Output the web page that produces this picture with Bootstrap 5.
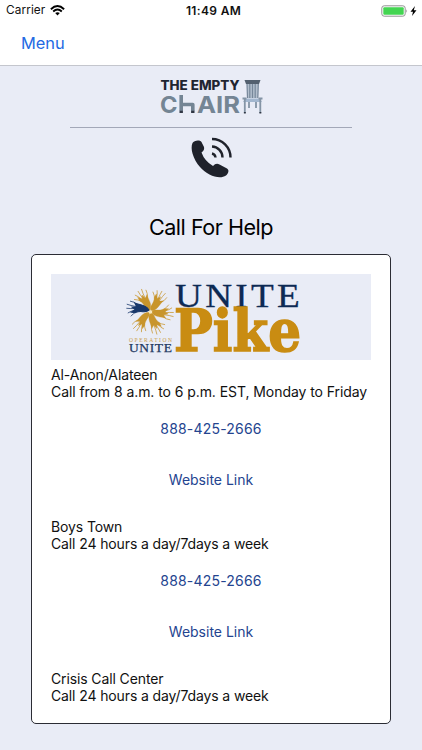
<!DOCTYPE html>
<html lang="en">
<head>
  <meta charset="UTF-8" />
  <meta name="viewport" content="width=device-width, initial-scale=1.0" />
  <title>Call For Help</title>
  <link href="https://cdn.jsdelivr.net/npm/bootstrap@5.3.0/dist/css/bootstrap.min.css" rel="stylesheet">
  <style>
    body { background: #e9ecf6; color: #111; font-family: Inter, "Liberation Sans", sans-serif; height: 750px; overflow: hidden; }
    svg { display: block; overflow: visible; }
    .status-bar { height: 21px; padding: 0 4px 0 6px; font-size: 11.8px; line-height: 21px; }
    .status-bar .carrier { letter-spacing: .1px; }
    .status-bar .clock { font-size: 12px; font-weight: 600; letter-spacing: .35px; padding-left: 3px; }
    .top-nav { height: 45px; padding: 0 21px; border-bottom: 1px solid #c4c6cd; }
    .menu-link { color: #2469e3; font-size: 16.4px; line-height: 44px; text-decoration: none; }
    .logo-row { height: 60px; padding-top: 12px; }
    .rule { width: 282px; height: 1px; margin-top: 1px; background: #a3a8b8; }
    .page-title { font-size: 21.6px; line-height: 28px; font-weight: 400; margin: 31px 0 13px; letter-spacing: -.5px; color: #000; }
    .help-card { width: 360px; height: 470px; margin: 0 31px; padding: 19px; border: 1px solid #2b2c34; border-radius: 5px; }
    .banner { height: 86px; background: #e9ecf6; }
    .entries { padding-top: 6px; }
    .entry { height: 152.2px; font-size: 14px; line-height: 17px; letter-spacing: -.12px; }
    .hours-long { letter-spacing: -.07px; }
    .call-link { color: #24448f; text-decoration: none; }
    .phone { margin-top: 20px; letter-spacing: .2px; }
    .website { margin-top: 34px; letter-spacing: 0; }
  </style>
</head>
<body>
  <header class="bg-white">
    <div class="status-bar row g-0">
      <div class="col d-flex align-items-center gap-1">
        <span class="carrier">Carrier</span>
        <svg width="15" height="11" viewBox="-1 0 15 11" fill="none" stroke="#000" stroke-width="1.9">
          <path d="M.9 4.2Q7.5-2 14.1 4.2M3.2 6.5Q7.5 2.6 11.8 6.5" />
          <path d="M5.2 8.1Q7.5 6.2 9.8 8.1L7.5 10.5Z" fill="#000" stroke="none" />
        </svg>
      </div>
      <div class="col-auto clock">11:49 AM</div>
      <div class="col d-flex align-items-center justify-content-end">
        <svg width="37" height="12" viewBox="0 0 37 12">
          <rect x=".8" y=".8" width="23.4" height="10.4" rx="2.4" fill="#fff" stroke="#929292" />
          <rect x="2.3" y="2.3" width="20.4" height="7.4" rx="1" fill="#43d551" />
          <path d="M25.3 4.2Q27 6 25.3 7.8Z" fill="#929292" />
          <path d="M34 1L29.5 6.7H32L31 11L35.5 5.2H32.8Z" fill="#000" />
        </svg>
      </div>
    </div>
    <nav class="top-nav">
      <a class="menu-link" href="#">Menu</a>
    </nav>
  </header>

  <main>
    <div class="logo-row d-flex justify-content-center">
      <svg width="104" height="38" viewBox="159.500 78 104 38">
        <g font-family="Inter, sans-serif" font-weight="700">
          <text x="161" y="90.300" font-size="13.200" font-weight="800" textLength="79" lengthAdjust="spacingAndGlyphs" fill="#1f2531">THE EMPTY</text>
          <text x="160.500" y="113" font-size="23" textLength="17.500" lengthAdjust="spacingAndGlyphs" fill="#748594">C</text>
          <text x="197.500" y="113" font-size="23" textLength="43" lengthAdjust="spacingAndGlyphs" fill="#748594">AIR</text>
        </g>
        <!-- the "h" is a small chair seen from the side -->
        <path d="M181.700 95V111M181.700 104.500H193.300V111" fill="none" stroke="#748594" stroke-width="3.600" stroke-linejoin="round" />
        <path d="M180 110.800H183.400V113H180ZM191.600 110.800H195V113H191.600Z" fill="#303744" />
        <path d="M247.500 84H259L258.500 98H247.500Z" fill="#b3bfcd" />
        <path d="M247.500 84L248 98M250.300 84V98M253 84V98M255.700 84V98M258.800 84L258.300 98" stroke="#76879a" stroke-width="1.200" />
        <path d="M245 80H261L259.500 84H246.500Z" fill="#53606f" />
        <path d="M246 98.500H260L262.500 102H243.500Z" fill="#a3b7cf" />
        <path d="M245.300 99V113M260.800 99V113M249.500 102V108M256.500 102V108M243 98.500H247M259 98.500H263" stroke="#8494a5" stroke-width="1.800" />
        <path d="M244.400 112H246.300V113.500H244.400ZM259.900 112H261.800V113.500H259.900Z" fill="#303744" />
      </svg>
    </div>
    <div class="rule mx-auto"></div>
    <svg class="phone-icon mx-auto" width="44" height="54" viewBox="189 128 44 54">
      <path d="M192.500 143C194 140.500 199.500 139.500 201.500 142L204 147Q204.800 150 201.500 152.500Q204.500 161 213 166Q216 162.500 219.500 164.500L227 168.500C229.500 170 228.500 173.500 226 175.500C219.500 180 207.500 175.500 200 167C193 159 190 148.500 192.500 143Z" fill="#1f222b" />
      <path d="M212 153.500A4.500 4.500 0 0 1 215.500 157.500M212 146.500A11 11 0 0 1 222.500 157.500M212 139A18.500 18.500 0 0 1 230.500 157.500" fill="none" stroke="#1f222b" stroke-width="2.400" />
    </svg>
    <h1 class="page-title text-center">Call For Help</h1>

    <section class="help-card bg-white">
      <div class="banner">
        <svg width="320" height="86" viewBox="51 274 320 86">
          <defs>
            <g id="blade">
              <path d="M0-1C-5-4-2-8-7-13L-8-17L-4-14.500L-3-18L-1-14L2-17C1-12 5-7 0-1Z" />
              <path d="M-5-12Q-9-15-12-16M-5-14Q-7-18-10-20M-3-14Q-5-19-6-23M-1-14Q-2-20-2-24M1-14Q3-18 2-22" fill="none" stroke-width=".7" />
            </g>
          </defs>
          <g transform="translate(150 311.500)" fill="#c8952c" stroke="#c8952c" stroke-width=".3">
            <use href="#blade" transform="rotate(-16)" />
            <use href="#blade" transform="rotate(45)" />
            <use href="#blade" transform="rotate(107)" />
            <use href="#blade" transform="rotate(168)" />
            <use href="#blade" transform="rotate(229)" />
            <use href="#blade" transform="translate(0 -1) rotate(290)" fill="#19386b" stroke="#19386b" stroke-width="1" />
          </g>
          <circle cx="150.500" cy="312" r="1.800" fill="#f7e7bd" />
          <g font-family="'Liberation Serif', serif">
            <text x="129" y="342" font-size="5.500" textLength="43" fill="#c9a04a">OPERATION</text>
            <text x="129" y="351.500" font-size="13" letter-spacing=".6" textLength="43.500" lengthAdjust="spacingAndGlyphs" fill="#20375f" stroke="#20375f" stroke-width=".25">UNITE</text>
            <text x="175" y="306.500" font-size="34.500" letter-spacing="3" textLength="128" lengthAdjust="spacingAndGlyphs" fill="#0d2a54" stroke="#0d2a54" stroke-width=".3">UNITE</text>
          </g>
          <text x="174" y="350.800" font-family="'DejaVu Serif', serif" font-size="57.500" font-weight="700" textLength="127" lengthAdjust="spacingAndGlyphs" fill="#c98c12" stroke="#c98c12" stroke-width="1.600">Pike</text>
        </svg>
      </div>

      <div class="entries">
        <article class="entry">
          <div>Al-Anon/Alateen</div>
          <div class="hours-long">Call from 8 a.m. to 6 p.m. EST, Monday to Friday</div>
          <div class="phone text-center"><a class="call-link" href="tel:888-425-2666">888-425-2666</a></div>
          <div class="website text-center"><a class="call-link" href="#">Website Link</a></div>
        </article>
        <article class="entry">
          <div>Boys Town</div>
          <div>Call 24 hours a day/7days a week</div>
          <div class="phone text-center"><a class="call-link" href="tel:888-425-2666">888-425-2666</a></div>
          <div class="website text-center"><a class="call-link" href="#">Website Link</a></div>
        </article>
        <article class="entry h-auto">
          <div>Crisis Call Center</div>
          <div>Call 24 hours a day/7days a week</div>
        </article>
      </div>
    </section>
  </main>
  <script src="https://cdn.jsdelivr.net/npm/bootstrap@5.3.0/dist/js/bootstrap.bundle.min.js"></script>
</body>
</html>
